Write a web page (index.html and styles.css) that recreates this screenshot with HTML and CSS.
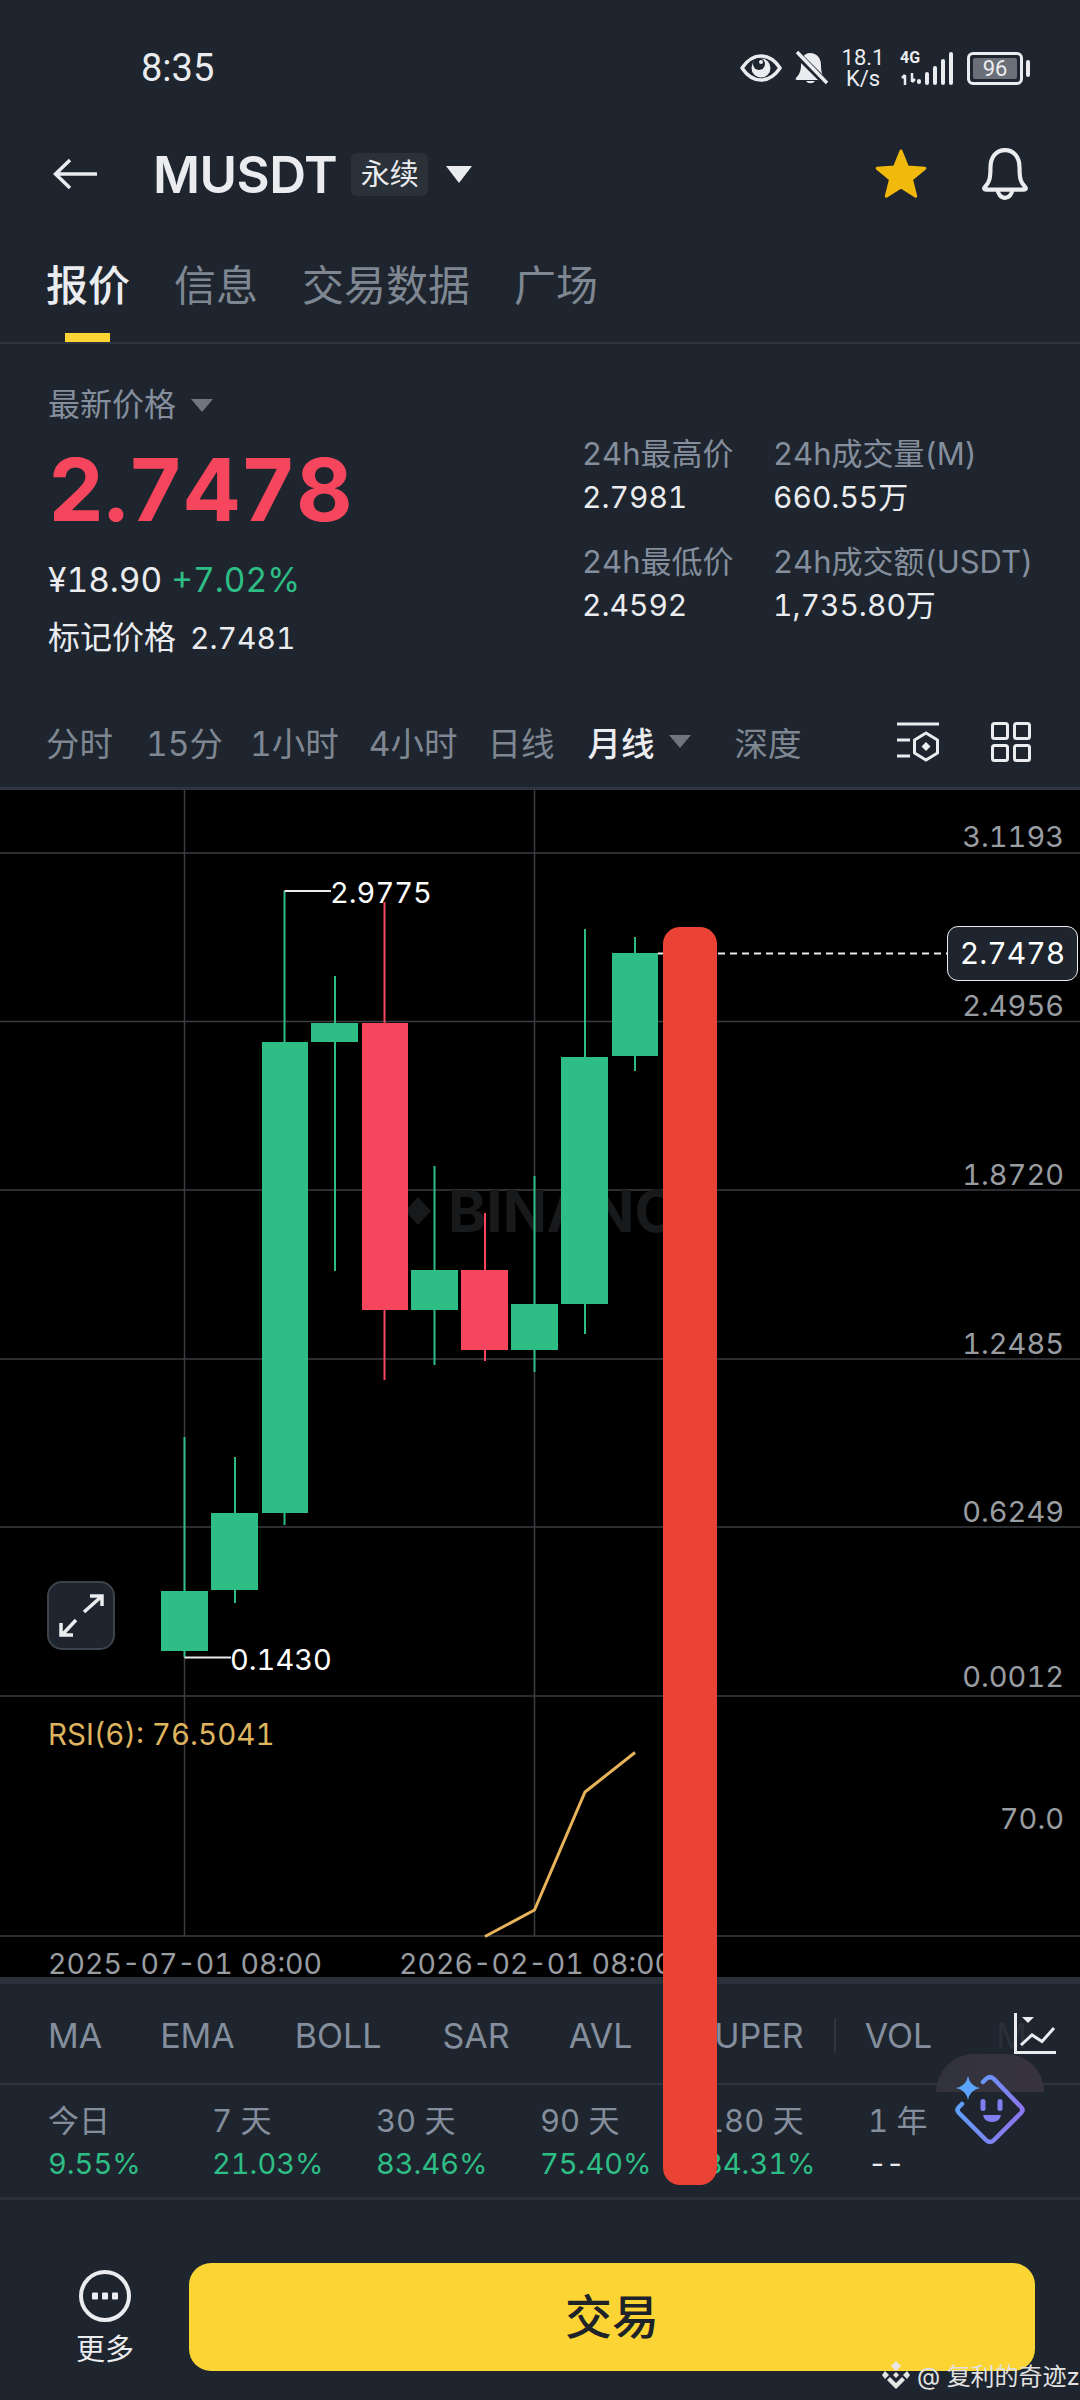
FILE: index.html
```html
<!DOCTYPE html>
<html>

<head>
  <meta charset="utf-8">
  <link rel="stylesheet" href="styles.css">
</head>

<body>
  <div class="page">

    <div class="status-bar">
      <div class="status-time">8:35</div>
      <div class="status-icons">
        <svg class="icon-eye" width="42" height="28" viewBox="0 0 42 28">
          <path d="M2 14C8 5 14 2 21 2s13 3 19 12c-6 9-12 12-19 12S8 23 2 14Z" fill="none" stroke="#eaecef" stroke-width="3.500" stroke-linejoin="round" />
          <circle cx="21" cy="14" r="9.500" fill="#eaecef" />
          <circle cx="19" cy="10" r="6" fill="#1e252e" />
          <circle cx="21" cy="8" r="2" fill="#eaecef" />
        </svg>
        <svg class="icon-mute" width="36" height="36" viewBox="0 0 36 36">
          <path d="M17 3c7 0 11 5 11 12 0 6 1 10 4 13 1 1 0 2-1 2H4c-1 0-2-1-1-2 3-3 5-7 5-13C8 8 11 3 17 3Z" fill="#eaecef" />
          <path d="M13 31a5 4 0 0 0 9 0Z" fill="#eaecef" />
          <path d="M3 3 33 33" stroke="#1e252e" stroke-width="7" />
          <path d="M4 2 34 33" stroke="#eaecef" stroke-width="3.500" />
        </svg>
        <div class="status-speed">
          <div>18.1</div>
          <div>K/s</div>
        </div>
        <div class="status-signal">
          <span class="signal-type">4G</span>
          <svg width="54" height="34" viewBox="0 0 54 34">
            <path d="M5 24v10M2 27l3-3M12 22v9M12 31l3-3" stroke="#eaecef" stroke-width="2.500" fill="none" />
            <rect x="17" y="28" width="4" height="5" rx="2" fill="#eaecef" />
            <rect x="25" y="21" width="4" height="13" rx="2" fill="#eaecef" />
            <rect x="33" y="15" width="4" height="19" rx="2" fill="#eaecef" />
            <rect x="41" y="8" width="4" height="26" rx="2" fill="#eaecef" />
            <rect x="49" y="1" width="4" height="33" rx="2" fill="#eaecef" />
          </svg>
        </div>
        <div class="battery">
          <div class="battery-level">96</div>
        </div>
        <div class="battery-nub"></div>
      </div>
    </div>

    <div class="top-bar">
      <svg width="46" height="34" viewBox="0 0 46 34">
        <path d="M4 17H45M18 3 3.500 17 18 31" fill="none" stroke="#eaecef" stroke-width="3.500" />
      </svg>
      <div class="pair-name">MUSDT</div>
      <div class="pair-tag">永续</div>
      <div class="caret caret-white"></div>
      <svg class="icon-star" width="54" height="50" viewBox="0 0 54 50">
        <polygon points="27,2 33.500,18.100 50.800,19.300 37.500,30.400 41.700,47.200 27,38 12.300,47.200 16.500,30.400 3.200,19.300 20.500,18.100" fill="#f0b90b" stroke="#f0b90b" stroke-width="3" stroke-linejoin="round" />
      </svg>
      <svg class="icon-bell" width="52" height="54" viewBox="0 0 50 52">
        <path d="M6 38c4-4 5-8 5-18C11 9 17 3 25 3s14 6 14 17c0 10 1 14 5 18 2 2 1 3-1 3H7c-2 0-3-1-1-3Z" fill="none" stroke="#eaecef" stroke-width="4" stroke-linejoin="round" />
        <path d="M18 41a7 8 0 0 0 14 0" fill="none" stroke="#eaecef" stroke-width="4" />
      </svg>
    </div>

    <div class="tabs">
      <div class="tab tab-active">报价</div>
      <div class="tab">信息</div>
      <div class="tab">交易数据</div>
      <div class="tab">广场</div>
    </div>

    <div class="quote">
      <div class="quote-main">
        <div class="quote-label">最新价格<span class="caret caret-grey"></span></div>
        <div class="quote-price">2.7478</div>
        <div class="quote-sub">¥18.90 <span class="text-green">+7.02%</span></div>
        <div class="quote-mark">标记价格<span class="quote-mark-value">2.7481</span></div>
      </div>
      <div class="quote-stats">
        <div class="stat-cell stat-first">
          <div class="stat-label">24h最高价</div>
          <div class="stat-value">2.7981</div>
        </div>
        <div class="stat-cell">
          <div class="stat-label">24h成交量(M)</div>
          <div class="stat-value">660.55万</div>
        </div>
        <div class="stat-cell stat-first">
          <div class="stat-label">24h最低价</div>
          <div class="stat-value">2.4592</div>
        </div>
        <div class="stat-cell">
          <div class="stat-label">24h成交额(USDT)</div>
          <div class="stat-value">1,735.80万</div>
        </div>
      </div>
    </div>

    <div class="intervals">
      <div class="interval interval-wide">分时</div>
      <div class="interval interval-tight">15分</div>
      <div class="interval">1小时</div>
      <div class="interval">4小时</div>
      <div class="interval interval-wide">日线</div>
      <div class="interval interval-active">月线</div>
      <div class="caret caret-grey caret-interval"></div>
      <div class="interval interval-depth">深度</div>
      <svg class="icon-settings" width="42" height="41" viewBox="0 0 42 41">
        <path d="M0 3H42M0 19H13M0 35H13" fill="none" stroke="#eaecef" stroke-width="3" />
        <polygon points="29,12 40.500,19 40.500,32 29,39 17.500,32 17.500,19" fill="none" stroke="#eaecef" stroke-width="3" stroke-linejoin="round" />
        <polygon points="29,21 33.500,25.500 29,30 24.500,25.500" fill="#eaecef" />
      </svg>
      <svg class="icon-grid" width="40" height="40" viewBox="0 0 40 40">
        <rect x="1.500" y="1.500" width="15" height="15" rx="2" fill="none" stroke="#eaecef" stroke-width="3" />
        <rect x="23.500" y="1.500" width="15" height="15" rx="2" fill="none" stroke="#eaecef" stroke-width="3" />
        <rect x="1.500" y="23.500" width="15" height="15" rx="2" fill="none" stroke="#eaecef" stroke-width="3" />
        <rect x="23.500" y="23.500" width="15" height="15" rx="2" fill="none" stroke="#eaecef" stroke-width="3" />
      </svg>
    </div>

    <div class="chart">
      <svg class="chart-svg" width="1080" height="1187" viewBox="0 790 1080 1187">
        <!-- grid -->
        <path class="grid-line" d="M0 853H1080M0 1021.500H1080M0 1190H1080M0 1359H1080M0 1527H1080M0 1696H1080M0 1936H1080M184.500 790V1936M534.500 790V1936" />

        <!-- watermark -->
        <polygon class="chart-mark" points="418,1197 431,1211 418,1225 405,1211" />
        <text class="chart-mark" x="448" y="1232">BINANCE</text>

        <!-- wicks -->
        <path class="wick-green" d="M184.500 1437V1657M235 1457V1603M284.500 891V1525M335 976V1271M434.500 1166V1365M534.500 1176V1372M585 929V1334M635 937V1071" />
        <path class="wick-red" d="M384.500 902V1380M485 1213V1361" />

        <!-- candles -->
        <rect class="candle-green" x="161" y="1591" width="47" height="60" />
        <rect class="candle-green" x="211" y="1513" width="47" height="77" />
        <rect class="candle-green" x="262" y="1042" width="46" height="471" />
        <rect class="candle-green" x="311" y="1023" width="47" height="19" />
        <rect class="candle-red" x="362" y="1023" width="46" height="287" />
        <rect class="candle-green" x="411" y="1270" width="47" height="40" />
        <rect class="candle-red" x="461" y="1270" width="47" height="80" />
        <rect class="candle-green" x="511" y="1304" width="47" height="46" />
        <rect class="candle-green" x="561" y="1057" width="47" height="247" />
        <rect class="candle-green" x="612" y="953" width="46" height="103" />

        <!-- high and low marks -->
        <path class="mark-line" d="M284.500 891H331M184.500 1657.500H231" />
        <text class="mark-text" x="330" y="903">2.9775</text>
        <text class="mark-text" x="230" y="1670">0.1430</text>

        <!-- last price -->
        <path class="last-line" d="M658 953.500H947" />

        <!-- price axis -->
        <text class="axis-text" x="1064" y="847" text-anchor="end">3.1193</text>
        <text class="axis-text" x="1064" y="1016" text-anchor="end">2.4956</text>
        <text class="axis-text" x="1064" y="1185" text-anchor="end">1.8720</text>
        <text class="axis-text" x="1064" y="1354" text-anchor="end">1.2485</text>
        <text class="axis-text" x="1064" y="1522" text-anchor="end">0.6249</text>
        <text class="axis-text" x="1064" y="1687" text-anchor="end">0.0012</text>
        <text class="axis-text" x="1064" y="1829" text-anchor="end">70.0</text>

        <!-- rsi -->
        <text class="rsi-text" x="48" y="1745">RSI(6): 76.5041</text>
        <polyline class="rsi-line" points="485,1936.500 534.500,1910 585,1792 635,1752.500" />

        <!-- time axis -->
        <text class="axis-text axis-date" x="48" y="1974">2025-07-01 08:00</text>
        <text class="axis-text axis-date" x="399" y="1974">2026-02-01 08:00</text>
      </svg>

      <div class="price-tag">2.7478</div>

      <div class="expand-button">
        <svg width="64" height="66" viewBox="0 0 64 66">
          <path d="M35 29 53 13M41 13H53V23M13 52 27 37M12 40V52H24" fill="none" stroke="#eaecef" stroke-width="3.500" />
        </svg>
      </div>
    </div>

    <div class="indicators">
      <div class="indicator indicator-ma">MA</div>
      <div class="indicator indicator-ema">EMA</div>
      <div class="indicator indicator-boll">BOLL</div>
      <div class="indicator indicator-sar">SAR</div>
      <div class="indicator indicator-avl">AVL</div>
      <div class="indicator indicator-super">SUPER</div>
      <div class="indicator-split"></div>
      <div class="indicator indicator-vol">VOL</div>
      <div class="indicator indicator-more">M</div>
      <svg class="icon-indicators" width="46" height="46" viewBox="0 0 46 46">
        <path d="M3.500 2V41.500H44" fill="none" stroke="#eaecef" stroke-width="3" />
        <polygon points="10,6 22,6 16,12" fill="#eaecef" />
        <polyline points="9,34 20,24 30,30.500 42,17" fill="none" stroke="#eaecef" stroke-width="3" />
      </svg>
    </div>

    <div class="returns">
      <div class="return-cell">
        <div class="return-label">今日</div>
        <div class="return-value text-green">9.55%</div>
      </div>
      <div class="return-cell">
        <div class="return-label">7 天</div>
        <div class="return-value text-green">21.03%</div>
      </div>
      <div class="return-cell">
        <div class="return-label">30 天</div>
        <div class="return-value text-green">83.46%</div>
      </div>
      <div class="return-cell">
        <div class="return-label">90 天</div>
        <div class="return-value text-green">75.40%</div>
      </div>
      <div class="return-cell">
        <div class="return-label">180 天</div>
        <div class="return-value text-green">84.31%</div>
      </div>
      <div class="return-cell">
        <div class="return-label">1 年</div>
        <div class="return-value return-empty">--</div>
      </div>
    </div>

    <div class="bottom-bar">
      <div class="more">
        <svg width="52" height="52" viewBox="0 0 52 52">
          <circle cx="26" cy="26" r="24" fill="none" stroke="#eaecef" stroke-width="4" />
          <rect x="13" y="22.500" width="6" height="7" rx="1" fill="#eaecef" />
          <rect x="23" y="22.500" width="6" height="7" rx="1" fill="#eaecef" />
          <rect x="33" y="22.500" width="6" height="7" rx="1" fill="#eaecef" />
        </svg>
        <div class="more-label">更多</div>
      </div>
      <div class="trade-button">交易</div>
    </div>

    <!-- floating helper -->
    <div class="helper-tab"></div>
    <svg class="helper-face" width="80" height="80" viewBox="950 2070 80 80">
      <defs>
        <linearGradient id="face-stroke" x1="0" y1="0" x2="1" y2="0.300">
          <stop offset="0" stop-color="#58a6ff" />
          <stop offset="1" stop-color="#8b78ee" />
        </linearGradient>
      </defs>
      <path d="M962 2104 959 2107Q956 2110 959 2113L986 2140Q990 2144 994 2140L1021 2113Q1024 2110 1021 2107L994 2079Q990 2075 986 2079L983 2082" fill="none" stroke="url(#face-stroke)" stroke-width="4.500" stroke-linecap="round" />
      <path d="M968 2076Q970 2086 980 2088 970 2090 968 2100 966 2090 956 2088 966 2086 968 2076Z" fill="#5aa4fb" />
      <rect x="980.500" y="2099" width="5" height="12" rx="2.500" fill="#7f7ff0" />
      <rect x="997.500" y="2099" width="5" height="12" rx="2.500" fill="#7f7ff0" />
      <path d="M983 2115H1001Q1000 2122 992 2122 984 2122 983 2115Z" fill="#7f7ff0" />
    </svg>

    <!-- red stroke drawn over the screenshot -->
    <div class="red-stroke"></div>

    <div class="credit">
      <svg width="28" height="30" viewBox="0 0 28 30">
        <polygon points="14,1 19,6 14,11 9,6" fill="#e6e6e6" />
        <polygon points="3,11 7,15 3,19 0,15" fill="#e6e6e6" />
        <polygon points="25,11 28,15 25,19 21,15" fill="#e6e6e6" />
        <polygon points="14,12 17,15 14,18 11,15" fill="#e6e6e6" />
        <polygon points="14,29 5,20 8,17 14,23 20,17 23,20" fill="#e6e6e6" />
      </svg>
      <span>@ 复利的奇迹z</span>
    </div>

  </div>
</body>

</html>
```

FILE: styles.css
```css
* {
  box-sizing: border-box;
}

body {
  margin: 0;
  background-color: #1e252e;
  font-family: "Inter", "Noto Sans CJK SC", sans-serif;
  font-variant-numeric: tabular-nums;
  color: #eaecef;
}

.page {
  position: relative;
  width: 1080px;
  height: 2400px;
  overflow: hidden;
  background-color: #1e252e;
}

.text-green {
  color: #2ebd85;
}

.caret {
  width: 0;
  height: 0;
  border-style: solid;
  border-color: transparent;
  border-bottom-width: 0;
}

.caret-white {
  margin-left: 18px;
  border-width: 17px 13px 0 13px;
  border-top-color: #eaecef;
}

.caret-grey {
  display: inline-block;
  border-width: 13px 11px 0 11px;
  border-top-color: #6f7680;
}

/* status bar */
.status-bar {
  display: flex;
  align-items: center;
  height: 136px;
  padding: 0 50px 0 141px;
}

.status-time {
  font-family: "Roboto", sans-serif;
  font-size: 38px;
}

.status-icons {
  display: flex;
  align-items: center;
  margin-left: auto;
}

.icon-mute {
  margin-left: 11px;
}

.status-speed {
  width: 46px;
  margin-left: 11px;
  font-family: "Roboto", sans-serif;
  font-size: 22px;
  line-height: 21px;
  text-align: center;
}

.status-signal {
  position: relative;
  margin-left: 14px;
}

.signal-type {
  position: absolute;
  top: -2px;
  left: 0;
  font-family: "Roboto", sans-serif;
  font-size: 16px;
  font-weight: 700;
  line-height: 18px;
}

.status-signal svg {
  display: block;
}

.battery {
  width: 56px;
  height: 33px;
  margin-left: 13px;
  padding: 3px;
  border: 3px solid #eaecef;
  border-radius: 6px;
}

.battery-level {
  height: 21px;
  border-radius: 2px;
  background-color: #6a6f78;
  font-family: "Roboto", sans-serif;
  font-size: 22px;
  line-height: 21px;
  text-align: center;
}

.battery-nub {
  width: 4px;
  height: 17px;
  margin-left: 3px;
  border-radius: 2px;
  background-color: #eaecef;
}

/* top bar */
.top-bar {
  display: flex;
  align-items: center;
  height: 76px;
  padding: 0 49px 0 52px;
}

.pair-name {
  margin-left: 55px;
  font-size: 51px;
  font-weight: 600;
  letter-spacing: -0.5px;
}

.pair-tag {
  width: 77px;
  height: 43px;
  margin-left: 14px;
  border-radius: 6px;
  background-color: #2b3139;
  font-size: 29px;
  line-height: 43px;
  text-align: center;
}

.icon-star {
  margin-left: auto;
}

.icon-bell {
  margin-left: 51px;
}

/* tabs */
.tabs {
  display: flex;
  gap: 44px;
  height: 132px;
  padding-left: 46px;
  border-bottom: 2px solid #2f353e;
}

.tab {
  position: relative;
  padding-top: 49px;
  color: #7f8792;
  font-size: 42px;
  line-height: 50px;
}

.tab-active {
  color: #eaecef;
  font-weight: 500;
}

.tab-active::after {
  content: "";
  position: absolute;
  left: 19px;
  bottom: 0;
  width: 45px;
  height: 9px;
  background-color: #fcd535;
}

/* quote */
.quote {
  display: flex;
  height: 356px;
}

.quote-main {
  width: 582px;
  padding: 39px 0 0 48px;
}

.quote-label {
  display: flex;
  align-items: center;
  color: #848e9c;
  font-size: 32px;
  line-height: 44px;
}

.quote-label .caret {
  margin-left: 15px;
}

.quote-price {
  margin-top: 18px;
  color: #f6465d;
  font-size: 87px;
  font-weight: 700;
  line-height: 90px;
}

.quote-sub {
  margin-top: 25px;
  font-size: 33.500px;
  line-height: 40px;
}

.quote-mark {
  margin-top: 18px;
  font-size: 32px;
  line-height: 40px;
}

.quote-mark-value {
  margin-left: 14px;
  font-size: 30px;
}

.quote-stats {
  display: grid;
  grid-template-columns: 191px auto;
  grid-auto-rows: 108px;
  padding-top: 90px;
}

.stat-label {
  color: #848e9c;
  font-size: 31px;
  line-height: 40px;
  white-space: nowrap;
}

.stat-value {
  margin-top: 3px;
  font-size: 30px;
  line-height: 40px;
  white-space: nowrap;
}

/* intervals */
.intervals {
  display: flex;
  align-items: center;
  height: 90px;
  padding: 0 49px 4px 46px;
  border-bottom: 3px solid #2f353e;
}

.interval {
  margin-right: 30px;
  color: #7f8792;
  font-size: 33.500px;
}

.interval-wide {
  margin-right: 33px;
}

.interval-tight {
  margin-right: 27px;
}

.interval-active {
  margin-right: 15px;
  color: #eaecef;
  font-weight: 500;
}

.caret-interval {
  margin-right: 43px;
}

.interval-depth {
  margin-right: 0;
}

.icon-settings {
  margin-left: auto;
}

.icon-grid {
  margin-left: 52px;
}

/* chart */
.chart {
  position: relative;
  height: 1187px;
  background-color: #000;
}

.chart-svg {
  display: block;
  overflow: visible;
}

.grid-line {
  fill: none;
  stroke: #3a3d42;
  stroke-width: 1.500;
}

.chart-mark {
  fill: #18191b;
  font-family: "Inter", sans-serif;
  font-size: 58px;
  font-weight: 700;
}

.wick-green {
  fill: none;
  stroke: #2ebd85;
  stroke-width: 2;
}

.wick-red {
  fill: none;
  stroke: #f6465d;
  stroke-width: 2;
}

.candle-green {
  fill: #2ebd85;
}

.candle-red {
  fill: #f6465d;
}

.mark-line {
  fill: none;
  stroke: #eaecef;
  stroke-width: 2;
}

.mark-text {
  fill: #fff;
  font-family: "Inter", sans-serif;
  font-size: 29px;
}

.last-line {
  fill: none;
  stroke: #eaecef;
  stroke-width: 2;
  stroke-dasharray: 7 5;
}

.axis-text {
  fill: #999da2;
  font-family: "Inter", sans-serif;
  font-size: 29px;
}

.axis-date {
  font-size: 28.500px;
}

.rsi-text {
  fill: #dfb45e;
  font-family: "Inter", sans-serif;
  font-size: 29.500px;
}

.rsi-line {
  fill: none;
  stroke: #e6b35a;
  stroke-width: 3;
}

.price-tag {
  position: absolute;
  top: 136px;
  left: 947px;
  width: 131px;
  height: 55px;
  border: 1.500px solid #eaecef;
  border-radius: 11px;
  background-color: #1e252e;
  color: #fff;
  font-size: 30px;
  line-height: 52px;
  text-align: center;
}

.expand-button {
  position: absolute;
  top: 791px;
  left: 47px;
  width: 68px;
  height: 69px;
  border: 2px solid #3d434c;
  border-radius: 15px;
  background-color: #1e252e;
}

.expand-button svg {
  display: block;
}

/* indicators */
.indicators {
  position: relative;
  display: flex;
  align-items: center;
  height: 108px;
  padding: 4px 0 0 48px;
  border-top: 7px solid #29303a;
  border-bottom: 2px solid #2f353e;
  color: #848e9c;
  font-size: 34px;
}

.indicator-ema {
  margin-left: 58px;
}

.indicator-boll {
  margin-left: 60px;
}

.indicator-sar {
  margin-left: 61px;
}

.indicator-avl {
  margin-left: 59px;
}

.indicator-super {
  margin-left: 60px;
}

.indicator-split {
  width: 2px;
  height: 35px;
  margin-left: 30px;
  background-color: #2f353e;
}

.indicator-vol {
  margin-left: 29px;
}

.indicator-more {
  margin-left: 64px;
  color: #2a3039;
}

.icon-indicators {
  position: absolute;
  top: 27px;
  right: 22px;
}

/* returns */
.returns {
  display: flex;
  height: 115px;
  padding-left: 48px;
  border-bottom: 3px solid #2a3039;
}

.return-cell {
  width: 164px;
  padding-top: 16px;
}

.return-label {
  color: #848e9c;
  font-size: 31px;
  line-height: 40px;
}

.return-value {
  margin-top: 3px;
  font-size: 29px;
  line-height: 40px;
}

.return-empty {
  letter-spacing: -1px;
}

/* bottom bar */
.bottom-bar {
  display: flex;
  align-items: flex-start;
  height: 201px;
}

.more {
  display: flex;
  flex-direction: column;
  align-items: center;
  width: 189px;
  padding: 70px 0 0 21px;
}

.more svg {
  display: block;
}

.more-label {
  margin-top: 8px;
  font-size: 29px;
  line-height: 40px;
}

.trade-button {
  width: 846px;
  height: 108px;
  margin-top: 63px;
  border-radius: 22px;
  background-color: #fcd535;
  color: #1e2329;
  font-size: 47px;
  font-weight: 500;
  line-height: 108px;
  text-align: center;
}

/* overlays */
.helper-tab {
  position: absolute;
  top: 2054px;
  left: 936px;
  width: 108px;
  height: 38px;
  border-radius: 54px 54px 0 0;
  background: linear-gradient(90deg, #31323d, #38343f);
}

.helper-face {
  position: absolute;
  top: 2070px;
  left: 950px;
}

.red-stroke {
  position: absolute;
  top: 927px;
  left: 663px;
  width: 54px;
  height: 1258px;
  border-radius: 17px;
  background-color: #ea4335;
}

.credit {
  position: absolute;
  top: 2357px;
  left: 882px;
  display: flex;
  align-items: center;
  gap: 7px;
  color: #e2e2e2;
  font-size: 24px;
  white-space: nowrap;
}
```
